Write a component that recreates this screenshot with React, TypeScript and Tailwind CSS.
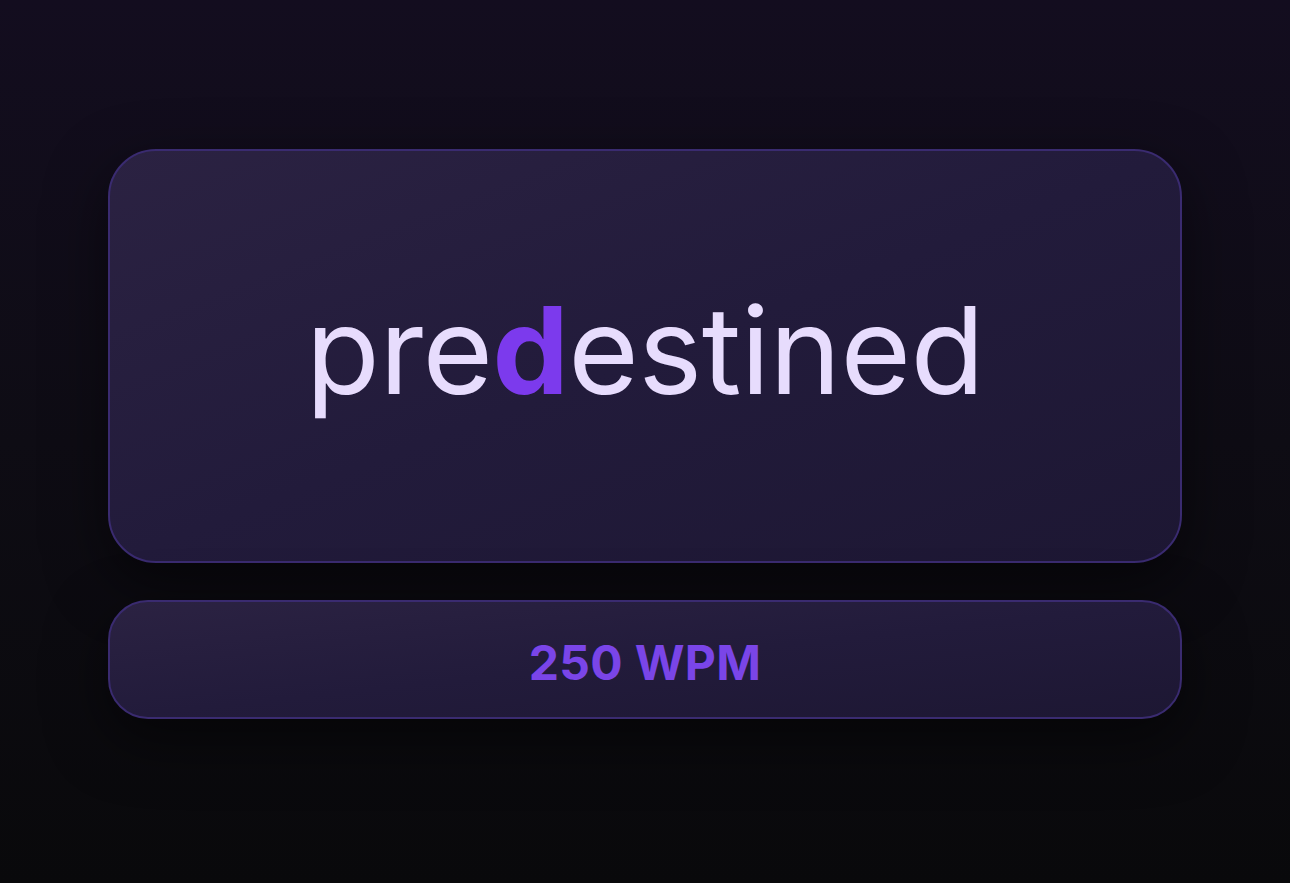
export default function App() {
  return (
    <div
      className="w-full h-[883px] flex flex-col items-center justify-center gap-[37px] bg-gradient-to-b from-[#130d1f] via-[#0e0c14] to-[#09090b] px-[108px] pb-[16px]"
      style={{ fontFamily: "Inter, 'Noto Sans', sans-serif" }}
    >
      <div className="w-full h-[414px] rounded-[48px] border-2 border-[#3a2b70] bg-gradient-to-br from-[#2b2242] via-[#221b3b] to-[#1d1733] shadow-[0_20px_60px_rgba(0,0,0,0.5)] flex items-center justify-center">
        <p className="text-[121px] leading-none text-[#e7dcfd] tracking-[-0.5px] pb-[10px]">
          pre<span className="font-bold text-[#7c3aed]">d</span>estined
        </p>
      </div>
      <div className="w-full h-[119px] rounded-[40px] border-2 border-[#3a2b70] bg-gradient-to-br from-[#2b2242] via-[#221b3b] to-[#1d1733] shadow-[0_20px_60px_rgba(0,0,0,0.5)] flex items-center justify-center">
        <span className="text-[48px] font-bold leading-none text-[#7a45e8] tracking-[0.3px] pt-[8px]">250 WPM</span>
      </div>
    </div>
  );
}
